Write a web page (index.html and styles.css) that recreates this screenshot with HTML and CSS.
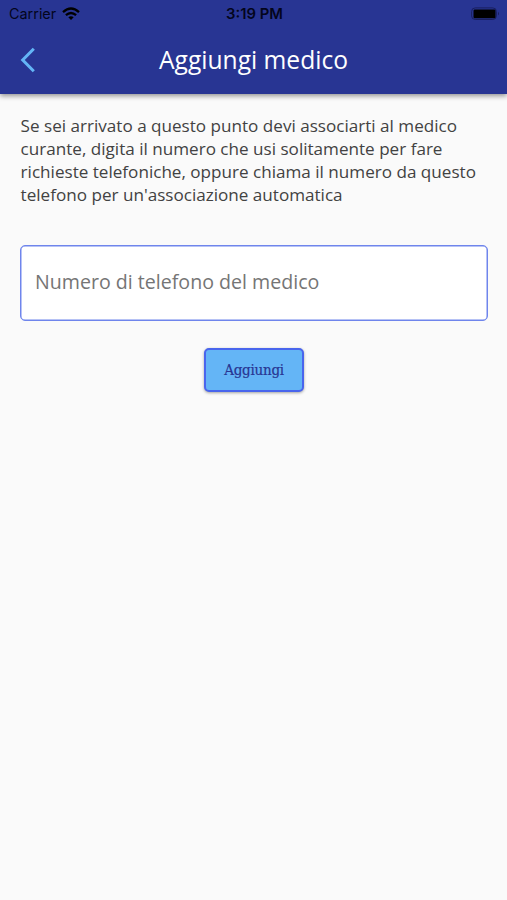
FILE: index.html
```html
<!DOCTYPE html>
<html lang="it">
<head>
<meta charset="utf-8">
<title>Aggiungi medico</title>
<link rel="stylesheet" href="styles.css">
</head>
<body>
<header class="header">
  <div class="status">
    <div class="carrier"><span>Carrier</span>
      <svg class="wifi" width="18" height="14" viewBox="0 0 18 14" fill="none" stroke="currentColor" stroke-width="2.3"><path d="M1 5.1Q9-2 17 5.1M3.9 8.2Q9 3.7 14.1 8.2"/><path d="M6.3 10.2Q9 8.1 11.7 10.2L9 13Z" fill="currentColor" stroke="none"/></svg>
    </div>
    <span class="time">3:19 PM</span>
    <svg class="battery" width="29" height="14" viewBox="0 0 29 14"><rect x=".6" y=".9" width="24.8" height="11.6" rx="3.6" fill="none" stroke="#191f60" stroke-width="1"/><rect x="2.5" y="2.6" width="22" height="8.6" rx="1.2"/><path d="M27 4.8Q29 6.7 27 8.6Z" fill="#191f60"/></svg>
  </div>
  <div class="toolbar">
    <svg class="back" width="16" height="26" viewBox="0 0 16 26" fill="none" stroke="#64b5f6" stroke-width="3"><path d="M13.8 1.7L2.7 13L13.8 24.3"/></svg>
    <h1 class="title">Aggiungi medico</h1>
  </div>
</header>
<main class="content">
  <p class="intro">Se sei arrivato a questo punto devi associarti al medico<br>curante, digita il numero che usi solitamente per fare<br>richieste telefoniche, oppure chiama il numero da questo<br>telefono per un'associazione automatica</p>
  <input class="phone" type="tel" placeholder="Numero di telefono del medico">
  <button class="submit" type="button">Aggiungi</button>
</main>
</body>
</html>
```

FILE: styles.css
```css
* { box-sizing: border-box; }
body {
  margin: 0;
  min-height: 900px;
  background: #fafafa;
  font-family: "Open Sans", "Noto Sans", sans-serif;
}
.header {
  height: 94px;
  background: #283593;
  box-shadow: 0 2px 5px rgba(0, 0, 0, .42);
}
.status {
  display: grid;
  grid-template-columns: 1fr auto 1fr;
  align-items: center;
  height: 27px;
  padding: 0 7px 0 9px;
  color: #03051c;
  font: 14.4px/27px Inter, sans-serif;
}
.carrier { display: flex; align-items: center; gap: 6px; padding-bottom: 1px; }
.wifi { color: #000; }
.time { padding-top: 1px; font-size: 14.8px; font-weight: 600; }
.battery { justify-self: end; }
.toolbar {
  display: grid;
  grid-template-columns: 40px 1fr 40px;
  align-items: center;
  height: 65px;
  padding: 0 20px;
}
.title {
  margin: 0;
  color: #fff;
  font-size: 24.6px;
  font-weight: 400;
  text-align: center;
}
.content {
  display: flex;
  flex-direction: column;
  align-items: center;
  padding: 19.5px 19px 0 20px;
}
.intro {
  align-self: flex-start;
  margin: 0 0 38.3px;
  padding-left: .6px;
  color: #424242;
  font-size: 17.1px;
  line-height: 23.3px;
  white-space: nowrap;
}
.phone {
  width: 100%;
  height: 76px;
  padding: 0 14px 2px;
  border: 1px solid #6f85ec;
  border-radius: 5px;
  background: #fff;
  box-shadow: inset 0 0 0 .5px #6f85ec;
  font: 19.6px "Open Sans", "Noto Sans", sans-serif;
}
.phone::placeholder { color: #757575; }
.submit {
  width: 100px;
  height: 44px;
  margin-top: 27px;
  padding: 0;
  border: 2px solid #4965ed;
  border-radius: 5px;
  background: #64b5f6;
  box-shadow: 0 1px 3px rgba(0, 0, 0, .35);
  color: #283593;
  font: 15px "DejaVu Serif Condensed", "DejaVu Serif", serif;
  letter-spacing: -.25px;
  -webkit-text-stroke: .2px #283593;
}
```
